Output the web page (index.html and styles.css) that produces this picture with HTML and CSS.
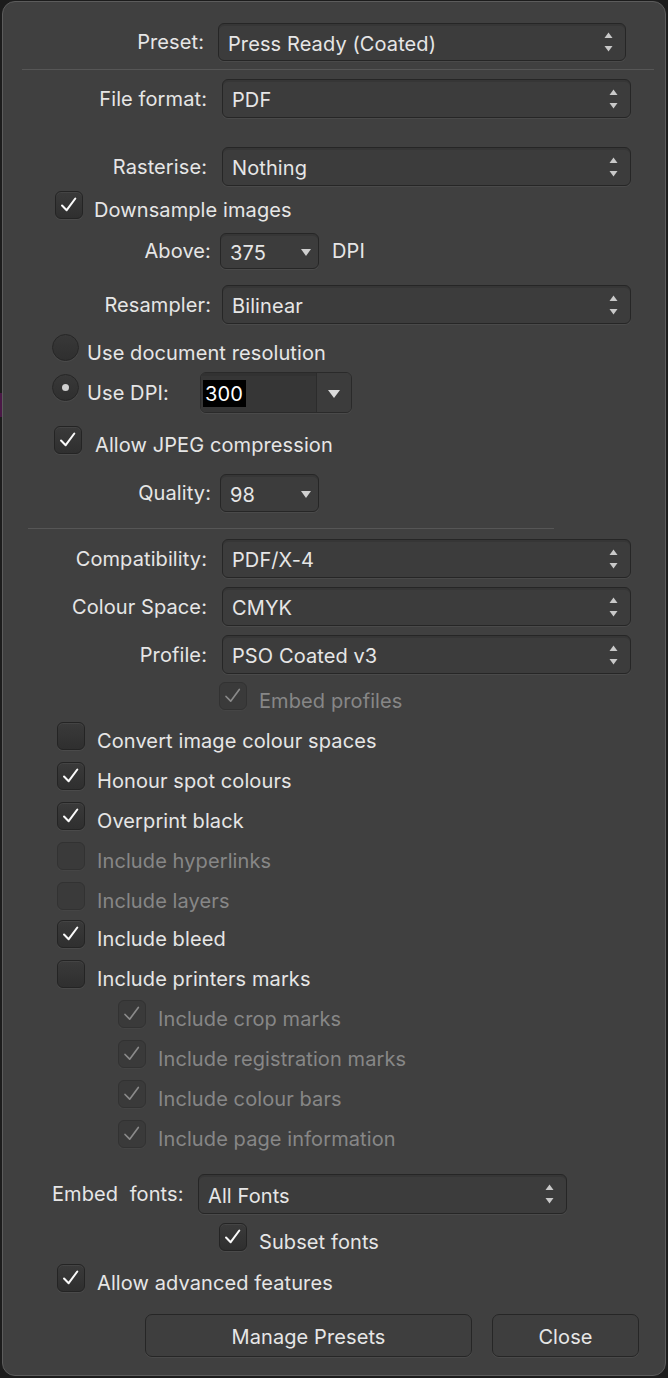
FILE: index.html
```html
<!DOCTYPE html>
<html>
<head>
<meta charset="utf-8">
<link rel="stylesheet" href="styles.css">
</head>
<body>
<div class="backdrop"></div>
<div class="panel">
  <div class="row r-preset">
    <span class="lbl lbl-preset">Preset:</span>
    <div class="popup pop-preset"><span class="ptext">Press Ready (Coated)</span>
      <svg class="stepper" width="9" height="20" viewBox="0 0 9 20"><polygon points="0.5,6 4.5,0.5 8.5,6"/><polygon points="0.5,14 4.5,19.5 8.5,14"/></svg></div>
  </div>
  <div class="sep sep1"></div>

  <div class="row r-format">
    <span class="lbl">File format:</span>
    <div class="popup pop-wide"><span class="ptext">PDF</span>
      <svg class="stepper" width="9" height="20" viewBox="0 0 9 20"><polygon points="0.5,6 4.5,0.5 8.5,6"/><polygon points="0.5,14 4.5,19.5 8.5,14"/></svg></div>
  </div>

  <div class="row r-raster">
    <span class="lbl">Rasterise:</span>
    <div class="popup pop-wide"><span class="ptext">Nothing</span>
      <svg class="stepper" width="9" height="20" viewBox="0 0 9 20"><polygon points="0.5,6 4.5,0.5 8.5,6"/><polygon points="0.5,14 4.5,19.5 8.5,14"/></svg></div>
  </div>

  <div class="row crow r-down">
    <span class="cb on"><svg viewBox="0 0 28 28"><path d="M6.5 14.5 L11.5 19.6 L20.8 7"/></svg></span>
    <span class="ctext">Downsample images</span>
  </div>

  <div class="row r-above">
    <span class="lbl lbl-b">Above:</span>
    <div class="popup pop-small pop-above"><span class="ptext">375</span>
      <svg class="darrow" width="10" height="7" viewBox="0 0 10 7"><polygon points="0,0 10,0 5,7"/></svg></div>
    <span class="unit">DPI</span>
  </div>

  <div class="row r-resamp">
    <span class="lbl lbl-b">Resampler:</span>
    <div class="popup pop-wide pop-resamp"><span class="ptext">Bilinear</span>
      <svg class="stepper" width="9" height="20" viewBox="0 0 9 20"><polygon points="0.5,6 4.5,0.5 8.5,6"/><polygon points="0.5,14 4.5,19.5 8.5,14"/></svg></div>
  </div>

  <div class="row rrow r-doc">
    <span class="radio"></span>
    <span class="rtext">Use document resolution</span>
  </div>

  <div class="row rrow r-dpi">
    <span class="radio sel"><span class="dot"></span></span>
    <span class="rtext rtext-dpi">Use DPI:</span>
    <div class="combo">
      <div class="cfield"><span class="csel">300</span></div>
      <div class="cbtn"><svg width="12" height="8" viewBox="0 0 12 8"><polygon points="0,0 12,0 6,8"/></svg></div>
    </div>
  </div>

  <div class="row crow r-jpeg">
    <span class="cb on"><svg viewBox="0 0 28 28"><path d="M6.5 14.5 L11.5 19.6 L20.8 7"/></svg></span>
    <span class="ctext">Allow JPEG compression</span>
  </div>

  <div class="row r-quality">
    <span class="lbl lbl-b">Quality:</span>
    <div class="popup pop-small"><span class="ptext">98</span>
      <svg class="darrow" width="10" height="7" viewBox="0 0 10 7"><polygon points="0,0 10,0 5,7"/></svg></div>
  </div>

  <div class="sep sep2"></div>

  <div class="row r-compat">
    <span class="lbl">Compatibility:</span>
    <div class="popup pop-wide"><span class="ptext">PDF/X-4</span>
      <svg class="stepper" width="9" height="20" viewBox="0 0 9 20"><polygon points="0.5,6 4.5,0.5 8.5,6"/><polygon points="0.5,14 4.5,19.5 8.5,14"/></svg></div>
  </div>
  <div class="row r-space">
    <span class="lbl">Colour Space:</span>
    <div class="popup pop-wide"><span class="ptext">CMYK</span>
      <svg class="stepper" width="9" height="20" viewBox="0 0 9 20"><polygon points="0.5,6 4.5,0.5 8.5,6"/><polygon points="0.5,14 4.5,19.5 8.5,14"/></svg></div>
  </div>
  <div class="row r-space">
    <span class="lbl">Profile:</span>
    <div class="popup pop-wide"><span class="ptext">PSO Coated v3</span>
      <svg class="stepper" width="9" height="20" viewBox="0 0 9 20"><polygon points="0.5,6 4.5,0.5 8.5,6"/><polygon points="0.5,14 4.5,19.5 8.5,14"/></svg></div>
  </div>

  <div class="row crow r-embedprof">
    <span class="cb on dis"><svg viewBox="0 0 28 28"><path d="M6.5 14.5 L11.5 19.6 L20.8 7"/></svg></span>
    <span class="ctext dtext">Embed profiles</span>
  </div>

  <div class="opts">
    <div class="row crow opt">
      <span class="cb"></span><span class="ctext">Convert image colour spaces</span>
    </div>
    <div class="row crow opt">
      <span class="cb on"><svg viewBox="0 0 28 28"><path d="M6.5 14.5 L11.5 19.6 L20.8 7"/></svg></span><span class="ctext">Honour spot colours</span>
    </div>
    <div class="row crow opt">
      <span class="cb on"><svg viewBox="0 0 28 28"><path d="M6.5 14.5 L11.5 19.6 L20.8 7"/></svg></span><span class="ctext">Overprint black</span>
    </div>
    <div class="row crow opt">
      <span class="cb dis"></span><span class="ctext dtext">Include hyperlinks</span>
    </div>
    <div class="row crow opt">
      <span class="cb dis"></span><span class="ctext dtext">Include layers</span>
    </div>
    <div class="row crow opt opt-bleed">
      <span class="cb on"><svg viewBox="0 0 28 28"><path d="M6.5 14.5 L11.5 19.6 L20.8 7"/></svg></span><span class="ctext">Include bleed</span>
    </div>
    <div class="row crow opt">
      <span class="cb"></span><span class="ctext">Include printers marks</span>
    </div>
  </div>

  <div class="subopts">
    <div class="row crow opt">
      <span class="cb on dis"><svg viewBox="0 0 28 28"><path d="M6.5 14.5 L11.5 19.6 L20.8 7"/></svg></span><span class="ctext dtext">Include crop marks</span>
    </div>
    <div class="row crow opt">
      <span class="cb on dis"><svg viewBox="0 0 28 28"><path d="M6.5 14.5 L11.5 19.6 L20.8 7"/></svg></span><span class="ctext dtext">Include registration marks</span>
    </div>
    <div class="row crow opt">
      <span class="cb on dis"><svg viewBox="0 0 28 28"><path d="M6.5 14.5 L11.5 19.6 L20.8 7"/></svg></span><span class="ctext dtext">Include colour bars</span>
    </div>
    <div class="row crow opt">
      <span class="cb on dis"><svg viewBox="0 0 28 28"><path d="M6.5 14.5 L11.5 19.6 L20.8 7"/></svg></span><span class="ctext dtext">Include page information</span>
    </div>
  </div>

  <div class="row r-fonts">
    <span class="lbl lbl-fonts">Embed&nbsp; fonts:</span>
    <div class="popup pop-fonts"><span class="ptext">All Fonts</span>
      <svg class="stepper" width="9" height="20" viewBox="0 0 9 20"><polygon points="0.5,6 4.5,0.5 8.5,6"/><polygon points="0.5,14 4.5,19.5 8.5,14"/></svg></div>
  </div>

  <div class="row crow r-subset">
    <span class="cb on"><svg viewBox="0 0 28 28"><path d="M6.5 14.5 L11.5 19.6 L20.8 7"/></svg></span>
    <span class="ctext">Subset fonts</span>
  </div>

  <div class="row crow r-adv">
    <span class="cb on"><svg viewBox="0 0 28 28"><path d="M6.5 14.5 L11.5 19.6 L20.8 7"/></svg></span>
    <span class="ctext">Allow advanced features</span>
  </div>

  <div class="row r-buttons">
    <div class="btn btn-manage">Manage Presets</div>
    <div class="btn btn-close">Close</div>
  </div>
</div>
</body>
</html>
```
FILE: styles.css
```css
html, body {
  margin: 0;
  padding: 0;
}
body {
  width: 668px;
  height: 1378px;
  overflow: hidden;
  background: #1c1c1c;
  font-family: Inter, "Noto Sans", sans-serif;
  font-size: 20px;
  letter-spacing: 0.1px;
  color: #e6e6e6;
  position: relative;
}
.backdrop {
  position: absolute;
  left: 0;
  top: 393px;
  width: 2px;
  height: 24px;
  background: #4a1846;
}
.panel {
  position: relative;
  box-sizing: border-box;
  margin: 1px 0 0 2px;
  width: 664px;
  height: 1375px;
  background: #404040;
  border: 1px solid #5c5c5c;
  border-radius: 13px;
  padding-top: 21px;
}
.row {
  display: flex;
  align-items: center;
}
.lbl {
  flex: none;
  box-sizing: border-box;
  width: 204px;
  text-align: right;
  margin-right: 15px;
  line-height: 24px;
  white-space: nowrap;
}
.lbl-preset { width: 201px; margin-right: 14px; }
.lbl-b { width: 208px; margin-right: 9px; }
.lbl-fonts { width: 132px; margin-left: 49px; margin-right: 14px; text-align: left; }

.popup {
  flex: none;
  box-sizing: border-box;
  position: relative;
  display: flex;
  align-items: center;
  border: 1.5px solid #262626;
  border-radius: 6px;
  background: #3c3c3c;
  box-shadow: inset 0 2px 0 #363636, 0 1px 0 #4a4a4a;
  padding-left: 9px;
}
.ptext { padding-top: 3px; line-height: 24px; white-space: nowrap; }
.pop-preset { width: 408px; height: 38px; }
.pop-wide { width: 409px; height: 39px; }
.pop-resamp { margin-left: 2px; }
.pop-small { width: 99px; height: 38px; }
.pop-above { height: 36px; }
.pop-fonts { width: 369px; height: 40px; }
.stepper {
  position: absolute;
  right: 12px;
  top: 50%;
  margin-top: -10px;
  fill: #c9c9c9;
}
.darrow {
  position: absolute;
  right: 7px;
  top: 50%;
  margin-top: -2px;
  fill: #cfcfcf;
}
.unit { margin-left: 13px; line-height: 24px; }

.sep { height: 1px; background: #565656; }
.sep1 { margin: 8px 11px 0 19px; }
.sep2 { margin: 16px 0 0 25px; width: 526px; }

.r-format { margin-top: 9px; }
.r-raster { margin-top: 29px; }
.r-above { margin-top: 14px; }
.r-resamp { margin-top: 16px; }
.r-quality { margin-top: 20px; }
.r-compat { margin-top: 10px; }
.r-space { margin-top: 9px; }

/* checkboxes */
.crow { align-items: flex-start; height: 28px; }
.cb {
  flex: none;
  box-sizing: border-box;
  width: 28px;
  height: 28px;
  border: 1px solid #242424;
  border-radius: 6px;
  background: linear-gradient(#3a3a3a, #2f2f2f);
  box-shadow: inset 0 1px 0 #444, 0 1px 0 #4a4a4a;
}
.cb svg { display: block; width: 26px; height: 26px; }
.cb svg path { fill: none; stroke: #fafafa; stroke-width: 2.2; stroke-linecap: round; stroke-linejoin: round; }
.cb.dis { background: #3a3a3a; border-color: #323232; box-shadow: 0 1px 0 #454545; }
.cb.dis svg path { stroke: #8a8a8a; stroke-width: 1.8; }
.ctext { margin-left: 12px; margin-top: 7px; line-height: 24px; white-space: nowrap; }
.dtext { color: #878787; }

.r-down { margin-top: 5px; margin-left: 52px; }
.r-down .ctext { margin-left: 11px; }
.r-jpeg { margin-top: 13px; margin-left: 51px; }
.r-jpeg .ctext { margin-left: 13px; }
.r-embedprof { margin-top: 8px; margin-left: 216px; }
.opt { margin-top: 12px; margin-left: 54px; }
.opt-bleed { margin-top: 10px; }
.subopts .opt { margin-left: 115px; }
.r-subset { margin-top: 9px; margin-left: 216px; }
.r-adv { margin-top: 13px; margin-left: 54px; }

/* radios */
.rrow { align-items: flex-start; }
.radio {
  flex: none;
  box-sizing: border-box;
  width: 27px;
  height: 27px;
  border-radius: 50%;
  border: 1px solid #262626;
  background: linear-gradient(#383838, #2f2f2f);
  box-shadow: 0 1px 0 #4a4a4a;
  display: flex;
  align-items: center;
  justify-content: center;
}
.dot { width: 7px; height: 7px; border-radius: 50%; background: #d0d0d0; }
.rtext { margin-left: 8px; margin-top: 8px; line-height: 22px; white-space: nowrap; }
.r-doc { margin-top: 10px; margin-left: 49px; height: 27px; }
.r-dpi { margin-top: 11px; margin-left: 49px; height: 41px; }
.r-dpi .radio { margin-top: 2px; }
.r-dpi .rtext { margin-top: 10px; width: 113px; }

.combo {
  flex: none;
  box-sizing: border-box;
  display: flex;
  width: 152px;
  height: 41px;
  border: 1.5px solid #2a2a2a;
  border-radius: 6px;
  overflow: hidden;
  box-shadow: 0 1px 0 #4a4a4a;
}
.cfield {
  flex: 1;
  background: #363636;
  box-shadow: inset 0 3px 0 #323232;
  display: flex;
  align-items: center;
  padding-left: 2px;
}
.csel {
  background: #000;
  color: #fff;
  line-height: 26px;
  padding: 1px 3px 0 2px;
  margin-top: 1px;
}
.cbtn {
  flex: none;
  width: 34px;
  border-left: 1.5px solid #2c2c2c;
  background: #3c3c3c;
  display: flex;
  align-items: center;
  justify-content: center;
  fill: #dcdcdc;
}
.cbtn svg { margin-top: 3px; }

.r-fonts { margin-top: 26px; }
.r-buttons { margin-top: 22px; margin-left: 142px; }
.btn {
  box-sizing: border-box;
  height: 43px;
  border: 1.5px solid #262626;
  border-radius: 7px;
  background: #3e3e3e;
  box-shadow: 0 1px 0 #4a4a4a;
  display: flex;
  align-items: center;
  justify-content: center;
  line-height: 24px;
  padding-top: 2px;
}
.btn-manage { width: 327px; }
.btn-close { width: 147px; margin-left: 20px; }
```
